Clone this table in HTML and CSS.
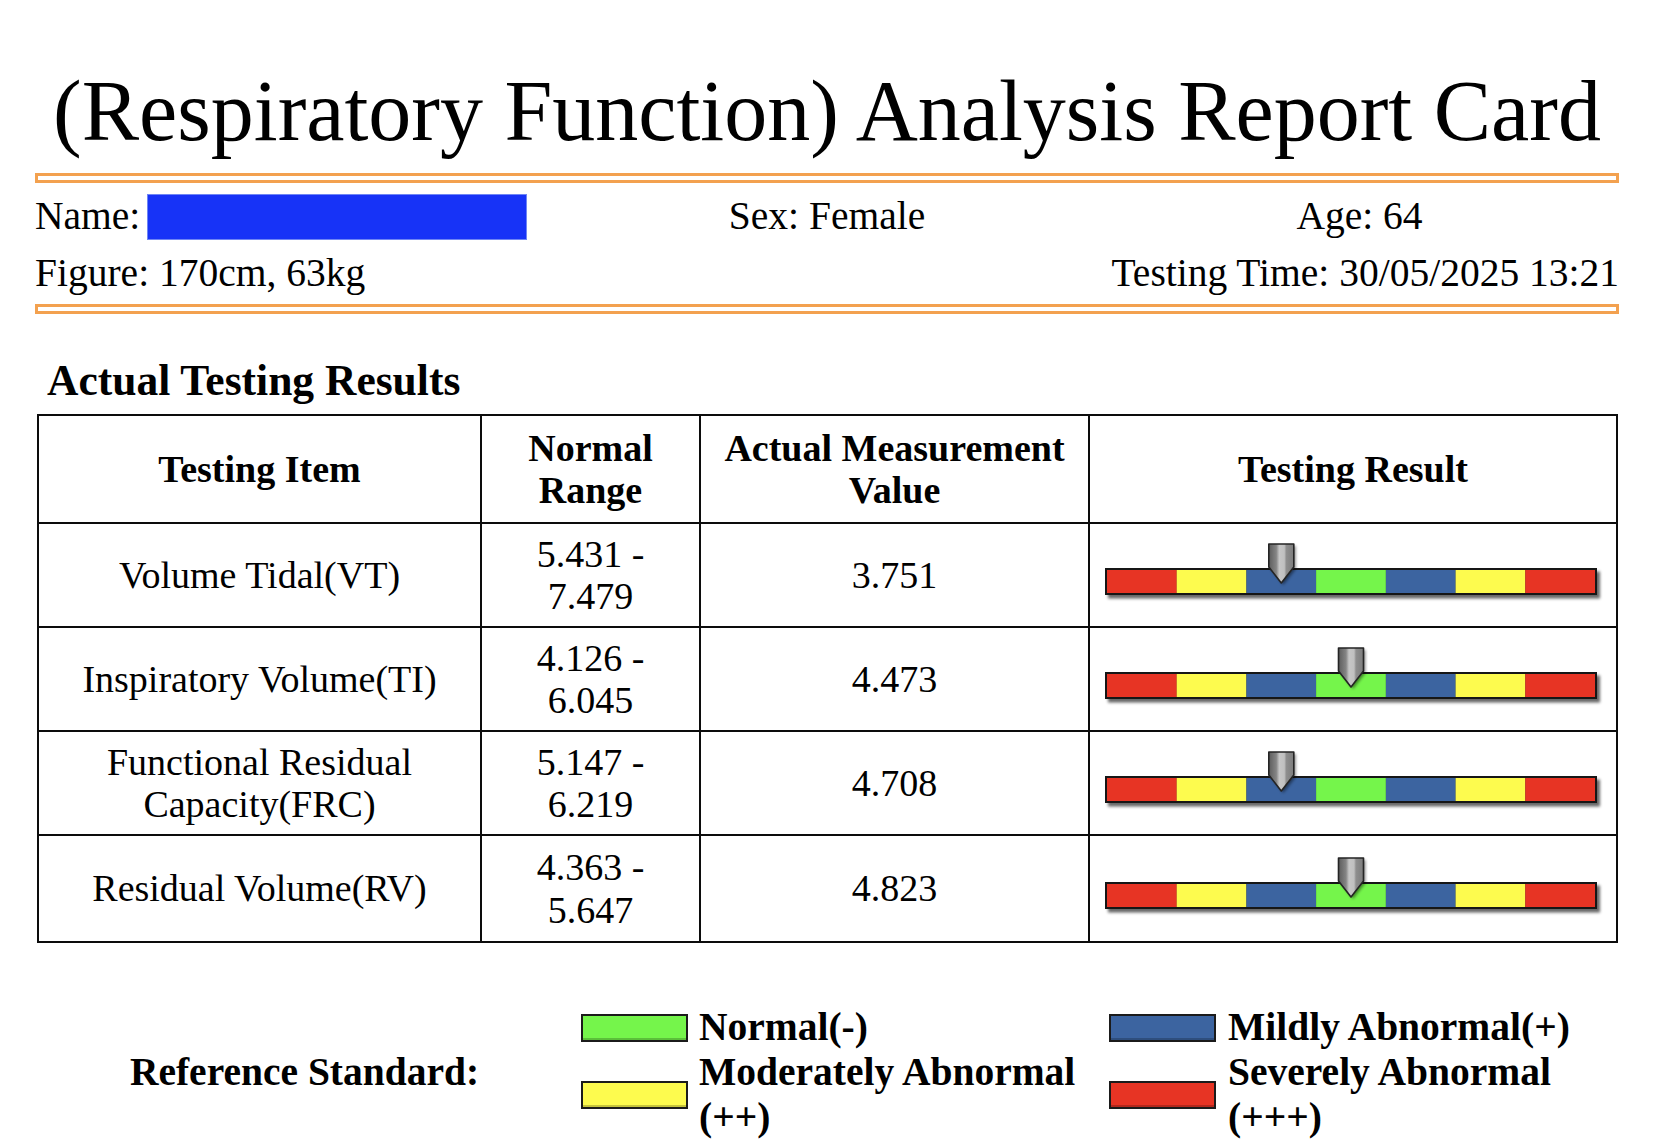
FILE: index.html
```html
<!DOCTYPE html>
<html lang="en">
<head>
<meta charset="utf-8">
<title>(Respiratory Function) Analysis Report Card</title>
<link rel="stylesheet" href="styles.css">
</head>
<body>
<div class="page">
  <h1 class="title">(Respiratory Function) Analysis Report Card</h1>
  <div class="rule"></div>
  <div class="info">
    <div class="name">Name:<span class="redact"></span></div>
    <div class="sex">Sex: Female</div>
    <div class="age">Age: 64</div>
    <div class="figure">Figure: 170cm, 63kg</div>
    <div class="time">Testing Time: 30/05/2025 13:21</div>
  </div>
  <div class="rule"></div>

  <h2 class="section">Actual Testing Results</h2>
  <table class="results">
    <colgroup>
      <col class="c-item"><col class="c-range"><col class="c-value"><col class="c-result">
    </colgroup>
    <thead>
      <tr><th>Testing Item</th><th>Normal Range</th><th>Actual Measurement Value</th><th>Testing Result</th></tr>
    </thead>
    <tbody>
      <tr>
        <td>Volume Tidal(VT)</td><td>5.431 - 7.479</td><td>3.751</td>
        <td class="gauge-cell">
          <svg class="gauge" width="500" height="64" viewBox="0 0 500 64">
            <defs>
              <filter id="bs1" x="-10%" y="-60%" width="120%" height="220%"><feGaussianBlur stdDeviation="1.6"/></filter>
              <linearGradient id="mg1" x1="0" y1="0" x2="1" y2="0">
                <stop offset="0" stop-color="#5c5c5c"/><stop offset="0.3" stop-color="#858585"/>
                <stop offset="0.42" stop-color="#c6c6c6"/><stop offset="0.62" stop-color="#c0c0c0"/>
                <stop offset="0.7" stop-color="#8e8e8e"/><stop offset="1" stop-color="#7c7c7c"/>
              </linearGradient>
            </defs>
            <rect x="5" y="28.5" width="492" height="27" fill="#000" opacity="0.6" filter="url(#bs1)"/>
            <rect x="2" y="25" width="492" height="27" fill="#161616"/>
            <rect x="4" y="27" width="69.8" height="23" fill="#e73424"/>
            <rect x="73.7" y="27" width="69.8" height="23" fill="#fdfb4e"/>
            <rect x="143.4" y="27" width="69.8" height="23" fill="#3c64a0"/>
            <rect x="213.1" y="27" width="69.8" height="23" fill="#75f54b"/>
            <rect x="282.9" y="27" width="69.8" height="23" fill="#3c64a0"/>
            <rect x="352.6" y="27" width="69.8" height="23" fill="#fdfb4e"/>
            <rect x="422.3" y="27" width="69.7" height="23" fill="#e73424"/>
            <path d="M167.8 3 H192.8 V26 L180.3 42 L167.8 26 Z" fill="#000" opacity="0.45" filter="url(#bs1)"/>
            <path d="M165.8 1 H190.8 V24 L178.3 40 L165.8 24 Z" fill="url(#mg1)" stroke="#242424" stroke-width="1.6" stroke-linejoin="round"/>
          </svg>
        </td>
      </tr>
      <tr>
        <td>Inspiratory Volume(TI)</td><td>4.126 - 6.045</td><td>4.473</td>
        <td class="gauge-cell">
          <svg class="gauge" width="500" height="64" viewBox="0 0 500 64">
            <defs>
              <filter id="bs2" x="-10%" y="-60%" width="120%" height="220%"><feGaussianBlur stdDeviation="1.6"/></filter>
              <linearGradient id="mg2" x1="0" y1="0" x2="1" y2="0">
                <stop offset="0" stop-color="#5c5c5c"/><stop offset="0.3" stop-color="#858585"/>
                <stop offset="0.42" stop-color="#c6c6c6"/><stop offset="0.62" stop-color="#c0c0c0"/>
                <stop offset="0.7" stop-color="#8e8e8e"/><stop offset="1" stop-color="#7c7c7c"/>
              </linearGradient>
            </defs>
            <rect x="5" y="28.5" width="492" height="27" fill="#000" opacity="0.6" filter="url(#bs2)"/>
            <rect x="2" y="25" width="492" height="27" fill="#161616"/>
            <rect x="4" y="27" width="69.8" height="23" fill="#e73424"/>
            <rect x="73.7" y="27" width="69.8" height="23" fill="#fdfb4e"/>
            <rect x="143.4" y="27" width="69.8" height="23" fill="#3c64a0"/>
            <rect x="213.1" y="27" width="69.8" height="23" fill="#75f54b"/>
            <rect x="282.9" y="27" width="69.8" height="23" fill="#3c64a0"/>
            <rect x="352.6" y="27" width="69.8" height="23" fill="#fdfb4e"/>
            <rect x="422.3" y="27" width="69.7" height="23" fill="#e73424"/>
            <path d="M237.5 3 H262.5 V26 L250 42 L237.5 26 Z" fill="#000" opacity="0.45" filter="url(#bs2)"/>
            <path d="M235.5 1 H260.5 V24 L248 40 L235.5 24 Z" fill="url(#mg2)" stroke="#242424" stroke-width="1.6" stroke-linejoin="round"/>
          </svg>
        </td>
      </tr>
      <tr>
        <td>Functional Residual Capacity(FRC)</td><td>5.147 - 6.219</td><td>4.708</td>
        <td class="gauge-cell">
          <svg class="gauge" width="500" height="64" viewBox="0 0 500 64">
            <defs>
              <filter id="bs3" x="-10%" y="-60%" width="120%" height="220%"><feGaussianBlur stdDeviation="1.6"/></filter>
              <linearGradient id="mg3" x1="0" y1="0" x2="1" y2="0">
                <stop offset="0" stop-color="#5c5c5c"/><stop offset="0.3" stop-color="#858585"/>
                <stop offset="0.42" stop-color="#c6c6c6"/><stop offset="0.62" stop-color="#c0c0c0"/>
                <stop offset="0.7" stop-color="#8e8e8e"/><stop offset="1" stop-color="#7c7c7c"/>
              </linearGradient>
            </defs>
            <rect x="5" y="28.5" width="492" height="27" fill="#000" opacity="0.6" filter="url(#bs3)"/>
            <rect x="2" y="25" width="492" height="27" fill="#161616"/>
            <rect x="4" y="27" width="69.8" height="23" fill="#e73424"/>
            <rect x="73.7" y="27" width="69.8" height="23" fill="#fdfb4e"/>
            <rect x="143.4" y="27" width="69.8" height="23" fill="#3c64a0"/>
            <rect x="213.1" y="27" width="69.8" height="23" fill="#75f54b"/>
            <rect x="282.9" y="27" width="69.8" height="23" fill="#3c64a0"/>
            <rect x="352.6" y="27" width="69.8" height="23" fill="#fdfb4e"/>
            <rect x="422.3" y="27" width="69.7" height="23" fill="#e73424"/>
            <path d="M167.8 3 H192.8 V26 L180.3 42 L167.8 26 Z" fill="#000" opacity="0.45" filter="url(#bs3)"/>
            <path d="M165.8 1 H190.8 V24 L178.3 40 L165.8 24 Z" fill="url(#mg3)" stroke="#242424" stroke-width="1.6" stroke-linejoin="round"/>
          </svg>
        </td>
      </tr>
      <tr class="last">
        <td>Residual Volume(RV)</td><td>4.363 - 5.647</td><td>4.823</td>
        <td class="gauge-cell">
          <svg class="gauge" width="500" height="64" viewBox="0 0 500 64">
            <defs>
              <filter id="bs4" x="-10%" y="-60%" width="120%" height="220%"><feGaussianBlur stdDeviation="1.6"/></filter>
              <linearGradient id="mg4" x1="0" y1="0" x2="1" y2="0">
                <stop offset="0" stop-color="#5c5c5c"/><stop offset="0.3" stop-color="#858585"/>
                <stop offset="0.42" stop-color="#c6c6c6"/><stop offset="0.62" stop-color="#c0c0c0"/>
                <stop offset="0.7" stop-color="#8e8e8e"/><stop offset="1" stop-color="#7c7c7c"/>
              </linearGradient>
            </defs>
            <rect x="5" y="28.5" width="492" height="27" fill="#000" opacity="0.6" filter="url(#bs4)"/>
            <rect x="2" y="25" width="492" height="27" fill="#161616"/>
            <rect x="4" y="27" width="69.8" height="23" fill="#e73424"/>
            <rect x="73.7" y="27" width="69.8" height="23" fill="#fdfb4e"/>
            <rect x="143.4" y="27" width="69.8" height="23" fill="#3c64a0"/>
            <rect x="213.1" y="27" width="69.8" height="23" fill="#75f54b"/>
            <rect x="282.9" y="27" width="69.8" height="23" fill="#3c64a0"/>
            <rect x="352.6" y="27" width="69.8" height="23" fill="#fdfb4e"/>
            <rect x="422.3" y="27" width="69.7" height="23" fill="#e73424"/>
            <path d="M237.5 3 H262.5 V26 L250 42 L237.5 26 Z" fill="#000" opacity="0.45" filter="url(#bs4)"/>
            <path d="M235.5 1 H260.5 V24 L248 40 L235.5 24 Z" fill="url(#mg4)" stroke="#242424" stroke-width="1.6" stroke-linejoin="round"/>
          </svg>
        </td>
      </tr>
    </tbody>
  </table>

  <div class="legend">
    <div class="legend-title">Reference Standard:</div>
    <div class="sw-cell"><span class="swatch sw-green"></span></div>
    <div class="legend-text">Normal(-)</div>
    <div class="sw-cell sw-cell-2"><span class="swatch sw-blue"></span></div>
    <div class="legend-text">Mildly Abnormal(+)</div>
    <div class="sw-cell"><span class="swatch sw-yellow"></span></div>
    <div class="legend-text">Moderately Abnormal (++)</div>
    <div class="sw-cell sw-cell-2"><span class="swatch sw-red"></span></div>
    <div class="legend-text">Severely Abnormal (+++)</div>
  </div>
</div>
</body>
</html>
```

FILE: styles.css
```css
html, body {
  margin: 0;
  padding: 0;
  background: #ffffff;
}

body {
  font-family: "Liberation Serif", "Times New Roman", Times, serif;
  color: #000000;
}

.page {
  width: 1584px;
  padding: 61px 0 0 35px;
}

.title {
  margin: 0 0 12px;
  font-size: 86px;
  font-weight: normal;
  line-height: 100px;
  text-align: center;
  white-space: nowrap;
}

.rule {
  height: 4px;
  border: 3px solid #f3a14f;
}

.info {
  display: grid;
  grid-template-columns: 592px 400px 1fr;
  grid-auto-rows: 57px;
  padding: 5px 0 2px;
  font-size: 39.5px;
  line-height: 57px;
  white-space: nowrap;
}

.name {
  grid-column: 1;
}

.redact {
  display: inline-block;
  width: 380px;
  height: 46px;
  margin-left: 7px;
  vertical-align: -11px;
  background: #1733f7;
  box-shadow: 0 0 0 1px #6f86f5 inset;
}

.sex {
  grid-column: 2;
  text-align: center;
}

.age {
  grid-column: 3;
  justify-self: end;
  width: 519px;
  text-align: center;
}

.figure {
  grid-column: 1;
}

.time {
  grid-column: 2 / span 2;
  text-align: right;
}

.section {
  margin: 42px 0 10px;
  padding-left: 12px;
  font-size: 43.5px;
  font-weight: bold;
  line-height: 48px;
}

.results {
  width: 1581px;
  margin-left: 2px;
  border-collapse: collapse;
  table-layout: fixed;
  font-size: 38px;
  line-height: 42.5px;
}

.c-item { width: 443px; }
.c-range { width: 219px; }
.c-value { width: 389px; }
.c-result { width: 528px; }

.results th,
.results td {
  border: 2px solid #0c0c0c;
  padding: 0 12px;
  text-align: center;
  vertical-align: middle;
}

.results th {
  font-weight: bold;
}

.results thead tr {
  height: 108px;
}

.results tbody tr {
  height: 104px;
}

.results tbody tr.last {
  height: 107px;
}

.results td.gauge-cell {
  padding: 0;
}

.gauge {
  display: block;
  margin: 0 auto;
}

.legend {
  display: grid;
  grid-template-columns: 533px 127px 402px 127px 1fr;
  margin: 62px 0 0 3px;
  font-size: 39.5px;
  font-weight: bold;
  line-height: 1.14;
}

.legend-title {
  grid-row: 1 / span 2;
  grid-column: 1;
  align-self: center;
  text-align: center;
}

.sw-cell {
  display: flex;
  align-items: center;
  padding: 0 10px;
}

.sw-cell-2 {
  padding: 0 11px 0 9px;
}

.swatch {
  display: block;
  width: 103px;
  height: 24px;
  border: 2px solid #1b1b1b;
  box-shadow: inset 0 -2px 0 rgba(0, 0, 0, 0.22);
}

.sw-green { background: #75f54b; }
.sw-blue { background: #3c64a0; }
.sw-yellow { background: #fdfb4e; }
.sw-red { background: #e73424; }

.legend-text {
  padding-left: 1px;
}
```
